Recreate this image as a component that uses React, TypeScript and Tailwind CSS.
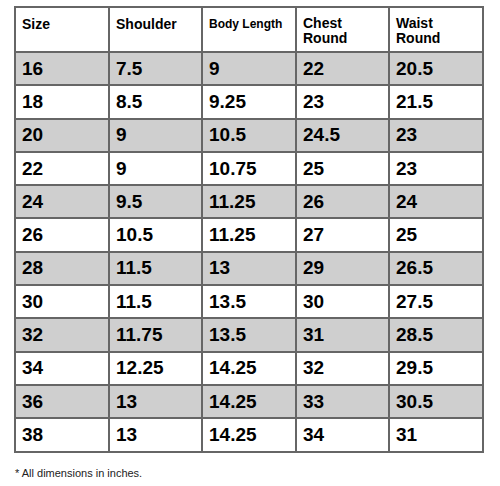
import React from 'react';

const rows: string[][] = [
  ['16', '7.5', '9', '22', '20.5'],
  ['18', '8.5', '9.25', '23', '21.5'],
  ['20', '9', '10.5', '24.5', '23'],
  ['22', '9', '10.75', '25', '23'],
  ['24', '9.5', '11.25', '26', '24'],
  ['26', '10.5', '11.25', '27', '25'],
  ['28', '11.5', '13', '29', '26.5'],
  ['30', '11.5', '13.5', '30', '27.5'],
  ['32', '11.75', '13.5', '31', '28.5'],
  ['34', '12.25', '14.25', '32', '29.5'],
  ['36', '13', '14.25', '33', '30.5'],
  ['38', '13', '14.25', '34', '31'],
];

export default function App() {
  return (
    <div className="w-[500px] h-[486px] bg-white pt-[6px] pl-[14px] text-black" style={{ fontFamily: '"Liberation Sans", Arial, sans-serif' }}>
      <table className="w-[470px] table-fixed border-collapse border-2 border-[#8a8a8a]">
        <thead>
          <tr className="h-[45px]">
            <th className="w-[94px] border-2 border-[#666] align-top text-left font-bold px-[6px] pt-[9px] text-[14px] leading-[15px]">Size</th>
            <th className="w-[93px] border-2 border-[#666] align-top text-left font-bold px-[6px] pt-[9px] text-[14px] leading-[15px]">Shoulder</th>
            <th className="w-[94px] border-2 border-[#666] align-top text-left font-bold px-[6px] pt-[9px] text-[12px] leading-[15px]">Body Length</th>
            <th className="w-[93px] border-2 border-[#666] align-top text-left font-bold px-[6px] pt-[8px] text-[14px] leading-[15px]">Chest<br />Round</th>
            <th className="w-[94px] border-2 border-[#666] align-top text-left font-bold px-[6px] pt-[8px] text-[14px] leading-[15px]">Waist<br />Round</th>
          </tr>
        </thead>
        <tbody>
          {rows.map((r, i) => (
            <tr key={r[0]} className={`h-[33.3px] ${i % 2 === 0 ? 'bg-[#cfcfcf]' : 'bg-white'}`}>
              {r.map((c, j) => (
                <td key={j} className="border-2 border-[#666] px-[6px] py-0 align-middle text-[19px] font-bold leading-[20px]">{c}</td>
              ))}
            </tr>
          ))}
        </tbody>
      </table>
      <p className="mt-[14px] pl-[1px] text-[11px] leading-[13px] text-[#222]">* All dimensions in inches.</p>
    </div>
  );
}
